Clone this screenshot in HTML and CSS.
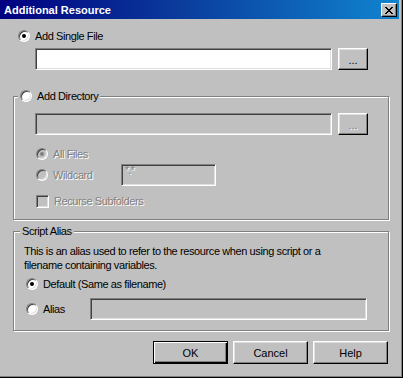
FILE: index.html
```html
<!DOCTYPE html>
<html>
<head>
<meta charset="utf-8">
<link rel="stylesheet" href="styles.css">
</head>
<body>
<div class="window">
  <div class="titlebar">
    <span class="title">Additional Resource</span>
    <span class="close"><svg width="8" height="7" viewBox="0 0 8 7" shape-rendering="crispEdges"><path d="M0 0h2v1H0zM6 0h2v1H6zM1 1h2v1H1zM5 1h2v1H5zM2 2h4v1H2zM3 3h2v1H3zM2 4h4v1H2zM1 5h2v1H1zM5 5h2v1H5zM0 6h2v1H0zM6 6h2v1H6z" fill="#000"/></svg></span>
  </div>
  <div class="content">
    <div class="opt single"><span class="radio checked"></span><span class="lbl">Add Single File</span></div>
    <div class="field-row single-field"><div class="field white"></div><div class="btn browse">...</div></div>

    <div class="group dir">
      <div class="group-title"><span class="radio"></span><span class="lbl">Add Directory</span></div>
      <div class="field-row dir-field"><div class="field"></div><div class="btn browse dis">...</div></div>
      <div class="opt sub all"><span class="radio checked disabled"></span><span class="lbl dis">All Files</span></div>
      <div class="opt sub wild"><span class="radio disabled"></span><span class="lbl dis wild-lbl">Wildcard</span><div class="field wild-field"><span class="dis">*.*</span></div></div>
      <div class="opt sub rec"><span class="check"></span><span class="lbl dis">Recurse Subfolders</span></div>
    </div>

    <div class="group alias">
      <div class="group-title plain"><span class="lbl">Script Alias</span></div>
      <p class="desc">This is an alias used to refer to the resource when using script or a<br>filename containing variables.</p>
      <div class="opt sub2 def"><span class="radio checked"></span><span class="lbl">Default (Same as filename)</span></div>
      <div class="opt sub2 al"><span class="radio"></span><span class="lbl alias-lbl">Alias</span><div class="field alias-field"></div></div>
    </div>

    <div class="buttons">
      <div class="btn default">OK</div>
      <div class="btn">Cancel</div>
      <div class="btn">Help</div>
    </div>
  </div>
</div>
</body>
</html>
```

FILE: styles.css
```css
html, body {
  margin: 0;
  padding: 0;
  background: #c0c0c0;
}

.window {
  width: 403px;
  height: 378px;
  box-sizing: border-box;
  background: #c0c0c0;
  border-right: 1px solid #000;
  border-bottom: 1px solid #000;
  box-shadow: inset -1px -1px 0 #808080;
  font-family: "Liberation Sans", Arial, sans-serif;
  font-size: 11px;
  color: #000;
  overflow: hidden;
}

.titlebar {
  height: 19px;
  margin-right: 3px;
  background: linear-gradient(to right, #000080 0%, #0a3c9c 45%, #1084d0 100%);
  display: flex;
  align-items: flex-start;
  justify-content: space-between;
}

.title {
  color: #fff;
  font-weight: bold;
  font-size: 11px;
  line-height: 17px;
  padding: 2px 0 0 4px;
}

.close {
  margin: 3px 2px 0 0;
  width: 16px;
  height: 14px;
  box-sizing: border-box;
  background: #c0c0c0;
  border: 1px solid;
  border-color: #fff #000 #000 #fff;
  box-shadow: inset -1px -1px 0 #808080;
  display: flex;
  align-items: center;
  justify-content: center;
}

.close svg {
  display: block;
}

.content {
  letter-spacing: -0.4px;
}

.lbl {
  line-height: 14px;
  white-space: nowrap;
}

.dis {
  color: #808080;
  text-shadow: 1px 1px 0 #fff;
}

.opt {
  display: flex;
  align-items: center;
  height: 14px;
}

.opt .lbl {
  margin-left: 5px;
}

.single {
  margin-top: 10px;
  padding-left: 18px;
}

.radio {
  width: 12px;
  height: 12px;
  box-sizing: border-box;
  border-radius: 50%;
  border: 1px solid;
  border-color: #808080 #fff #fff #808080;
  box-shadow: inset 1px 1px 0 #404040, inset -1px -1px 0 #dfdfdf;
  background: #fff;
  flex: none;
  display: flex;
  align-items: center;
  justify-content: center;
}

.radio.checked::after {
  content: "";
  width: 4px;
  height: 4px;
  border-radius: 50%;
  background: #000;
}

.radio.disabled {
  background: #c0c0c0;
}

.radio.disabled.checked::after {
  background: #808080;
}

.check {
  width: 13px;
  height: 13px;
  box-sizing: border-box;
  border: 1px solid;
  border-color: #808080 #fff #fff #808080;
  box-shadow: inset 1px 1px 0 #404040, inset -1px -1px 0 #dfdfdf;
  background: #c0c0c0;
  flex: none;
}

.field-row {
  display: flex;
  gap: 6px;
  height: 22px;
}

.single-field {
  margin-top: 5px;
  padding-left: 35px;
}

.field {
  box-sizing: border-box;
  height: 22px;
  border: 1px solid;
  border-color: #808080 #fff #fff #808080;
  box-shadow: inset 1px 1px 0 #404040, inset -1px -1px 0 #dfdfdf;
  background: #c0c0c0;
}

.field-row .field {
  width: 297px;
}

.field.white {
  background: #fff;
}

.btn {
  box-sizing: border-box;
  width: 75px;
  height: 23px;
  border: 1px solid;
  border-color: #fff #000 #000 #fff;
  box-shadow: inset -1px -1px 0 #808080, inset 1px 1px 0 #dfdfdf;
  background: #c0c0c0;
  display: flex;
  align-items: center;
  justify-content: center;
  letter-spacing: 0;
}

.btn.browse {
  width: 30px;
  height: 22px;
  padding-top: 2px;
}

.btn.default {
  border-color: #000;
  box-shadow: inset 1px 1px 0 #fff, inset -1px -1px 0 #000, inset -2px -2px 0 #808080;
}

.group {
  box-sizing: border-box;
  width: 376px;
  margin-left: 13px;
  border: 1px solid #808080;
  box-shadow: inset 1px 1px 0 #fff, 1px 1px 0 #fff;
}

.group-title {
  display: flex;
  width: fit-content;
  align-items: center;
  height: 14px;
  margin: -8px 0 0 4px;
  padding: 0 2px;
  background: #c0c0c0;
}

.group-title .lbl {
  margin-left: 5px;
}

.group-title.plain {
  margin-left: 6px;
}

.group-title.plain .lbl {
  margin-left: 0;
}

.dir {
  margin-top: 26px;
  padding-bottom: 11px;
}

.dir-field {
  margin-top: 10px;
  padding-left: 21px;
}

.sub {
  padding-left: 22px;
}

.all {
  margin-top: 12px;
}

.wild {
  margin-top: 3px;
  height: 22px;
}

.wild-lbl {
  width: 68px;
}

.wild-field {
  width: 95px;
  padding: 0 0 0 3px;
  line-height: 11px;
  font-size: 10px;
}

.rec {
  margin-top: 8px;
}

.alias {
  margin-top: 11px;
  padding-bottom: 10px;
}

.desc {
  margin: 6px 0 0 0;
  padding-left: 10px;
  line-height: 14px;
}

.sub2 {
  padding-left: 12px;
}

.def {
  margin-top: 5px;
}

.al {
  margin-top: 7px;
  height: 22px;
}

.alias-lbl {
  width: 47px;
}

.alias-field {
  width: 277px;
}

.buttons {
  display: flex;
  justify-content: flex-end;
  gap: 5px;
  margin-top: 10px;
  padding-right: 14px;
}
```
